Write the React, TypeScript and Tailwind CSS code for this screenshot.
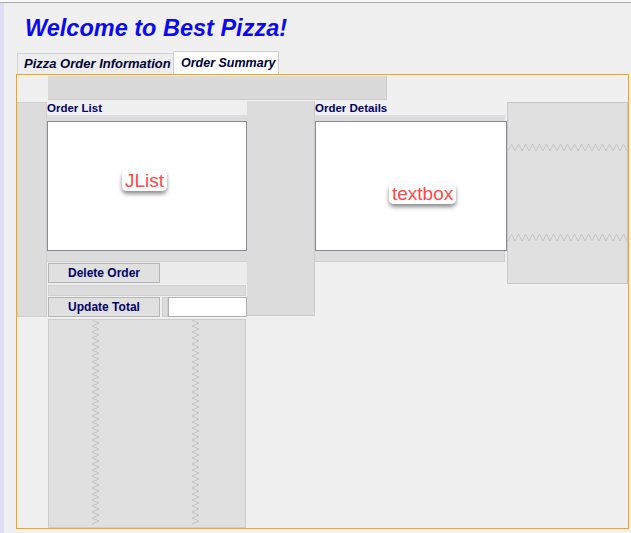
import React from "react";

function ZigzagV({ height }: { height: number }) {
    const pts: string[] = [];
    for (let y = 0, i = 0; y <= height; y += 3, i++) pts.push(`${i % 2 ? 8 : 1},${y}`);
    return (
        <svg width="9" height={height} className="block">
            <polyline points={pts.join(" ")} fill="none" stroke="#c4c4c4" strokeWidth="1" />
        </svg>
    );
}

function ZigzagH({ width }: { width: number }) {
    const pts: string[] = [];
    for (let x = 0, i = 0; x <= width; x += 3.5, i++) pts.push(`${x},${i % 2 ? 1 : 8}`);
    return (
        <svg width={width} height="9" className="block">
            <polyline points={pts.join(" ")} fill="none" stroke="#c4c4c4" strokeWidth="1" />
        </svg>
    );
}

function Sticker({ text }: { text: string }) {
    return (
        <span className="bg-white rounded-[5px] px-[3px] leading-[22px] text-[19px] text-[#ff4848] shadow-[0_3px_4px_rgba(0,0,0,0.45)] font-['Liberation_Sans',Arial,sans-serif]">
            {text}
        </span>
    );
}

const label = "h-[14px] text-[11.5px] leading-[14px] font-bold text-[#000066] font-['Liberation_Sans',Tahoma,sans-serif]";
const button = "w-[112px] h-[20px] bg-[#e0e0e0] border border-[#b4b4b4] flex items-center justify-center text-[12px] font-bold text-[#000066] font-['Liberation_Sans',Tahoma,sans-serif]";

export default function App() {
    return (
        <div className="w-[631px] h-[533px] bg-[#f0f0f0] flex flex-col overflow-hidden">
            <div className="h-[2px] bg-[#f8f8f8]" />
            <div className="h-[1px] bg-[#a8a8a8]" />
            <div className="flex flex-1">
                <div className="w-[4px] bg-[#dedef7]" />
                <div className="flex-1 flex flex-col">
                    {/* title */}
                    <div className="mt-[10px] ml-[21px] h-[30px] leading-[30px] text-[23.5px] font-bold italic text-[#0a0aef] font-['Liberation_Sans',Arial,sans-serif]">
                        Welcome to Best Pizza!
                    </div>

                    {/* tabs */}
                    <div className="mt-[8px] ml-[13px] h-[23px] flex items-end">
                        <div className="shrink-0 w-[156px] h-[21px] bg-[#eeeeee] border-t border-l border-[#d4d4d4] pl-[6px] flex items-center whitespace-nowrap text-[13px] font-bold italic text-[#000033] font-['Liberation_Sans',Tahoma,sans-serif]">
                            Pizza Order Information
                        </div>
                        <div className="shrink-0 w-[106px] h-[23px] bg-white border-t border-l border-r border-[#cfcfcf] pl-[7px] flex items-center whitespace-nowrap text-[12.5px] font-bold italic text-[#000033] font-['Liberation_Sans',Tahoma,sans-serif]">
                            Order Summary
                        </div>
                    </div>

                    {/* panel */}
                    <div className="ml-[12px] w-[613px] h-[455px] border border-[#ffa500] grid grid-cols-[30px_200px_68px_192px_121px] grid-rows-[26px_217px_1fr]">
                        {/* top bar */}
                        <div className="col-start-2 col-span-3 row-start-1 ml-[1px] mt-[1px] w-[339px] h-[24px] bg-[#dadada] border-b border-r border-[#cccccc]" />

                        {/* left column */}
                        <div className="col-start-1 row-start-2 mt-[1px] h-[215px] bg-[#dcdcdc] border border-[#d0d0d0]" />

                        {/* order list */}
                        <div className="col-start-2 row-start-2 flex flex-col">
                            <div className={label}>Order List</div>
                            <div className="h-[6px] bg-[#dcdcdc]" />
                            <div className="relative h-[130px] bg-white border border-[#8a8a96]">
                                <div className="absolute left-[74px] top-[47px]">
                                    <Sticker text="JList" />
                                </div>
                            </div>
                            <div className="h-[11px] bg-[#dcdcdc] border-b border-[#cfcfcf]" />
                            <div className="h-[22px] ml-[1px] pt-[1px] flex bg-[#ececec]">
                                <div className={button}>Delete Order</div>
                            </div>
                            <div className="h-[11px] ml-[1px] w-[198px] mt-[1px] bg-[#dcdcdc] border border-[#cfcfcf]" />
                            <div className="h-[22px] ml-[1px] pt-[1px] flex">
                                <div className={button}>Update Total</div>
                                <div className="w-[6px] h-[20px] ml-[2px] bg-[#dcdcdc] border border-[#cfcfcf]" />
                                <div className="w-[79px] h-[20px] bg-white border border-[#b0b0b0]" />
                            </div>
                        </div>

                        {/* middle column */}
                        <div className="col-start-3 row-start-2 h-[215px] bg-[#dcdcdc] border-r border-b border-[#cccccc]" />

                        {/* order details */}
                        <div className="col-start-4 row-start-2 flex flex-col">
                            <div className={label}>Order Details</div>
                            <div className="h-[6px] w-[190px] bg-[#dcdcdc]" />
                            <div className="relative h-[130px] bg-white border border-[#8a8a96]">
                                <div className="absolute left-[73px] top-[60px]">
                                    <Sticker text="textbox" />
                                </div>
                            </div>
                            <div className="h-[11px] w-[190px] bg-[#dcdcdc] border-b border-r border-[#cfcfcf]" />
                        </div>

                        {/* right panel */}
                        <div className="col-start-5 row-start-2 mt-[1px] h-[182px] bg-[#e0e0e0] border border-[#c8c8c8] flex flex-col">
                            <div className="mt-[40px]"><ZigzagH width={119} /></div>
                            <div className="mt-[81px]"><ZigzagH width={119} /></div>
                        </div>

                        {/* bottom filler */}
                        <div className="col-start-2 row-start-3 ml-[1px] mt-[1px] w-[198px] bg-[#e0e0e0] border border-[#cccccc] flex">
                            <div className="ml-[42px]"><ZigzagV height={206} /></div>
                            <div className="ml-[91px]"><ZigzagV height={206} /></div>
                        </div>
                    </div>
                </div>
            </div>
        </div>
    );
}
